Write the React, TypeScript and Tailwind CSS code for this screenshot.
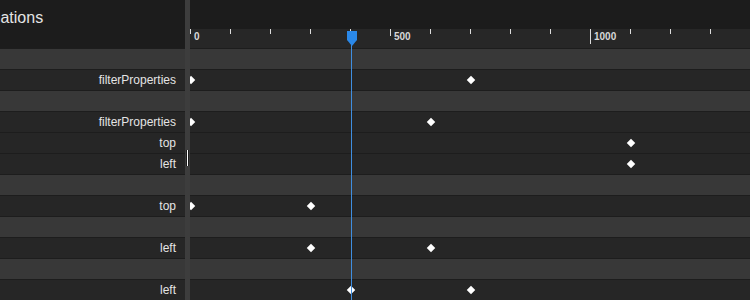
import React from 'react';

type Row = { label?: string; group?: boolean; keys?: number[] };

// time in ms -> px, 100ms = 40px
const px = (t: number) => t * 0.4;

const rows: Row[] = [
  { group: true },
  { label: 'filterProperties', keys: [0, 700] },
  { group: true },
  { label: 'filterProperties', keys: [0, 600] },
  { label: 'top', keys: [1100] },
  { label: 'left', keys: [1100] },
  { group: true },
  { label: 'top', keys: [0, 300] },
  { group: true },
  { label: 'left', keys: [300, 600] },
  { group: true },
  { label: 'left', keys: [400, 700] },
];

const ticks = Array.from({ length: 14 }, (_, i) => i * 100);

const Diamond = ({ t }: { t: number }) => (
  <div
    className="absolute top-1/2 w-[6px] h-[6px] bg-white rotate-45 -translate-y-1/2"
    style={{ left: px(t) - 2 }}
  />
);

export default function App() {
  return (
    <div className="w-[750px] h-[300px] bg-[#262626] overflow-hidden flex font-['Liberation_Sans',Arial,sans-serif] text-[#e4e4e4]">
      {/* label column, scrolled so the title is clipped */}
      <div className="w-[185px] shrink-0 flex flex-col overflow-hidden">
        <div className="h-[48px] bg-[#1c1c1c] pt-[8px] overflow-hidden">
          <div className="ml-[-36px] text-[16px] leading-[20px] whitespace-nowrap">Animations</div>
        </div>
        {rows.map((r, i) => (
          <div
            key={i}
            className={`h-[21px] border-t border-[#1d1d1d] flex items-center justify-end pr-[9px] text-[12px] ${
              r.group ? 'bg-[#383838]' : 'bg-[#262626]'
            }`}
          >
            {r.label}
          </div>
        ))}
      </div>

      {/* splitter */}
      <div className="relative w-[5px] shrink-0 bg-[#3d3d3d]">
        <div className="absolute left-[1px] top-[150px] w-[3px] h-[16px] bg-[#1a1a1a] flex justify-center">
          <div className="w-px h-full bg-white" />
        </div>
      </div>

      {/* timeline */}
      <div className="relative flex-1 flex flex-col overflow-hidden">
        <div className="h-[48px] bg-[#1c1c1c] flex flex-col">
          <div className="h-[29px]" />
          <div className="relative flex-1 bg-[#272727]">
            {ticks.map((t) => (
              <div
                key={t}
                className={`absolute top-0 w-px bg-[#dcdcdc] ${t === 1000 ? 'h-[15px]' : t === 500 ? 'h-[7px]' : 'h-[5px]'}`}
                style={{ left: px(t) }}
              />
            ))}
            {[0, 500, 1000].map((t) => (
              <span
                key={t}
                className="absolute top-[2px] text-[10px] leading-[12px] font-bold text-[#d8d8d8]"
                style={{ left: px(t) + 4 }}
              >
                {t}
              </span>
            ))}
          </div>
        </div>
        {rows.map((r, i) => (
          <div
            key={i}
            className={`relative h-[21px] border-t border-[#1d1d1d] ${r.group ? 'bg-[#383838]' : 'bg-[#262626]'}`}
          >
            {r.keys?.map((k) => <Diamond key={k} t={k} />)}
          </div>
        ))}

        {/* playhead */}
        <div className="absolute left-[161px] top-[44px] bottom-0 w-px bg-[#3f8ee0]" />
        <svg className="absolute left-[157px] top-[31px]" width="10" height="15" viewBox="0 0 10 15">
          <path d="M0 0 H10 V9 L5 15 L0 9 Z" fill="#2a88e8" />
        </svg>
      </div>
    </div>
  );
}
